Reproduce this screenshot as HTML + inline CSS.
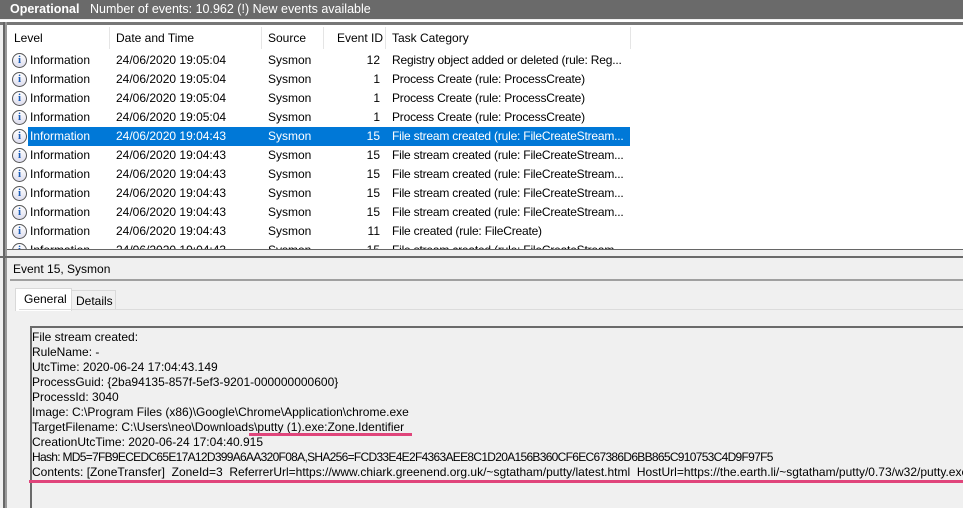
<!DOCTYPE html><html><head><style>
body{margin:0;width:963px;height:508px;overflow:hidden;background:#f0f0f0;font-family:"Liberation Sans",sans-serif;font-size:12px;color:#000;position:relative}
.a{position:absolute}
.top{left:0;top:0;width:963px;height:19px;background:#6a6a6a;color:#fff;font-size:12.5px;line-height:18px}
.list{left:7px;top:25px;width:956px;height:224px;background:#fff;overflow:hidden}
.row{position:absolute;left:0;height:19px;line-height:19px;width:700px;white-space:nowrap}
.row span{position:absolute}
.ic{position:absolute;left:5px;top:2px;width:13px;height:13px;border:1px solid #555;border-radius:50%;background:linear-gradient(#fff,#dde);color:#1a5bb5;font-weight:bold;font-size:11px;line-height:13px;text-align:center;font-family:"Liberation Serif",serif}
.sel{position:absolute;left:21px;width:602px;height:19px;background:#0078d7}
.txt{left:32px;top:330px;line-height:15px;white-space:nowrap}
</style></head><body>
<div class="a top"><b style="position:absolute;left:10px">Operational</b><span style="position:absolute;left:90px">Number of events: 10.962 (!) New events available</span></div>
<div class="a" style="left:0;top:20px;width:963px;height:2px;background:#fff"></div>
<div class="a" style="left:0;top:22px;width:963px;height:3px;background:#777"></div>
<div class="a" style="left:3px;top:22px;width:2px;height:486px;background:#666"></div>
<div class="a" style="left:5px;top:22px;width:2px;height:486px;background:#999"></div>
<div class="a list">
<div class="row" style="top:0;height:24px;line-height:26px"><span style="left:7px">Level</span><span style="left:109px">Date and Time</span><span style="left:261px">Source</span><span style="left:330px">Event ID</span><span style="left:385px">Task Category</span></div>
<div class="a" style="left:102px;top:2px;width:1px;height:22px;background:#e5e5e5"></div>
<div class="a" style="left:254px;top:2px;width:1px;height:22px;background:#e5e5e5"></div>
<div class="a" style="left:316px;top:2px;width:1px;height:22px;background:#e5e5e5"></div>
<div class="a" style="left:378px;top:2px;width:1px;height:22px;background:#e5e5e5"></div>
<div class="a" style="left:623px;top:2px;width:1px;height:22px;background:#e5e5e5"></div>
<div id="rows"></div>
</div>
<div class="a" style="left:7px;top:249px;width:956px;height:1px;background:#666"></div>
<div class="a" style="left:0;top:256px;width:963px;height:2px;background:#6a6a6a"></div>
<div class="a" style="left:13px;top:262px">Event 15, Sysmon</div>
<div class="a" style="left:10px;top:279px;width:953px;height:2px;background:#a0a0a0"></div>
<div class="a" style="left:15px;top:288px;width:55px;height:22px;background:#fff;border:1px solid #d9d9d9;border-bottom:none"><span style="position:absolute;left:8px;top:3px">General</span></div>
<div class="a" style="left:71px;top:290px;width:43px;height:19px;border:1px solid #d9d9d9;border-bottom:none"><span style="position:absolute;left:4px;top:3px">Details</span></div>
<div class="a" style="left:19px;top:309px;width:944px;height:1px;background:#dcdcdc"></div>
<div class="a" style="left:30px;top:326px;width:933px;height:2px;background:#6a6a6a"></div>
<div class="a" style="left:30px;top:326px;width:2px;height:182px;background:#6a6a6a"></div>
<div class="a txt">File stream created:<br>RuleName: -<br>UtcTime: 2020-06-24 17:04:43.149<br>ProcessGuid: {2ba94135-857f-5ef3-9201-000000000600}<br>ProcessId: 3040<br>Image: C:\Program Files (x86)\Google\Chrome\Application\chrome.exe<br>TargetFilename: C:\Users\neo\Downloads\putty (1).exe:Zone.Identifier<br>CreationUtcTime: 2020-06-24 17:04:40.915<br><span style="letter-spacing:-0.7px">Hash: MD5=7FB9ECEDC65E17A12D399A6AA320F08A,SHA256=FCD33E4E2F4363AEE8C1D20A156B360CF6EC67386D6BB865C910753C4D9F97F5</span><br>Contents: [ZoneTransfer]&nbsp; ZoneId=3&nbsp; ReferrerUrl=https://www.chiark.greenend.org.uk/~sgtatham/putty/latest.html&nbsp; HostUrl=https://the.earth.li/~sgtatham/putty/0.73/w32/putty.exe</div>
<div class="a" style="left:249px;top:433px;width:163px;height:3px;background:#e0457b"></div>
<div class="a" style="left:29px;top:480px;width:934px;height:3px;background:#e0457b"></div>
<script>
var d=[["19:05:04","12","Registry object added or deleted (rule: Reg..."],["19:05:04","1","Process Create (rule: ProcessCreate)"],["19:05:04","1","Process Create (rule: ProcessCreate)"],["19:05:04","1","Process Create (rule: ProcessCreate)"],["19:04:43","15","File stream created (rule: FileCreateStream..."],["19:04:43","15","File stream created (rule: FileCreateStream..."],["19:04:43","15","File stream created (rule: FileCreateStream..."],["19:04:43","15","File stream created (rule: FileCreateStream..."],["19:04:43","15","File stream created (rule: FileCreateStream..."],["19:04:43","11","File created (rule: FileCreate)"],["19:04:43","15","File stream created (rule: FileCreateStream..."]];
var h="";d.forEach(function(r,i){var s=i==4;h+='<div class="row" style="top:'+(26+i*19)+'px;'+(s?'color:#fff':'')+'">'+(s?'<div class="sel"></div>':'')+'<div class="ic">i</div><span style="left:23px">Information</span><span style="left:109px">24/06/2020 '+r[0]+'</span><span style="left:261px">Sysmon</span><span style="left:330px;width:43px;text-align:right">'+r[1]+'</span><span style="left:385px;letter-spacing:-0.2px">'+r[2]+'</span></div>'});
document.getElementById("rows").innerHTML=h;
</script>
</body></html>
